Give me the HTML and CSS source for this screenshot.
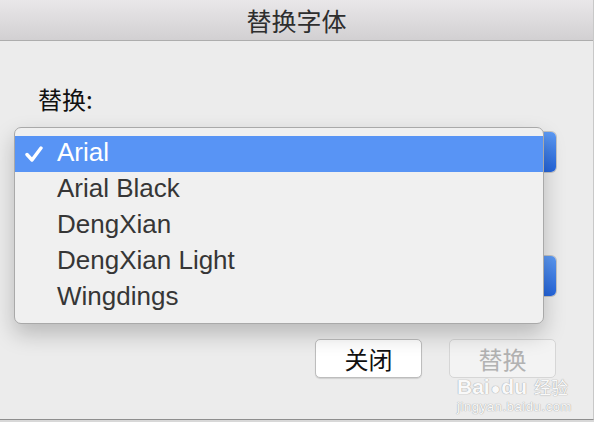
FILE: index.html
```html
<!DOCTYPE html>
<html lang="zh">
<head>
<meta charset="utf-8">
<link rel="stylesheet" href="styles.css">
</head>
<body>
<div class="window">
  <div class="titlebar">替换字体</div>
  <div class="content">
    <div class="label">替换:</div>
    <div class="popup"><span class="cap"></span></div>
    <div class="spacer"></div>
    <div class="popup"><span class="cap"></span></div>
    <div class="actions">
      <button class="btn">关闭</button>
      <button class="btn disabled">替换</button>
    </div>
  </div>
  <ul class="menu">
    <li class="item selected"><span class="check"><svg width="18" height="16" viewBox="0 0 18 16"><path d="M2 8.5 L7 14 L16 2" fill="none" stroke="#fff" stroke-width="3.4" stroke-linecap="round" stroke-linejoin="round"/></svg></span><span>Arial</span></li>
    <li class="item"><span class="check"></span><span>Arial Black</span></li>
    <li class="item"><span class="check"></span><span>DengXian</span></li>
    <li class="item"><span class="check"></span><span>DengXian Light</span></li>
    <li class="item"><span class="check"></span><span>Wingdings</span></li>
  </ul>
  <div class="watermark">
    <div class="wm-logo"><span>Bai</span><span class="paw">●</span><span>du</span><span class="wm-cn">经验</span></div>
    <div class="wm-url">jingyan.baidu.com</div>
  </div>
</div>
</body>
</html>
```
FILE: styles.css
```css
html, body {
  margin: 0;
  padding: 0;
  background: #d8d8d8;
}
.window {
  position: relative;
  width: 593px;
  height: 419px;
  background: #ececec;
  border-bottom: 1px solid #8e8e8e;
  border-right: 1px solid #c8c8c8;
  display: flex;
  flex-direction: column;
  overflow: hidden;
}
.titlebar {
  flex: none;
  height: 41px;
  box-sizing: border-box;
  padding-top: 1px;
  border-bottom: 1px solid #adadad;
  background: linear-gradient(#e9e7e9, #d2d0d2);
  display: flex;
  align-items: center;
  justify-content: center;
  font-family: "Noto Sans CJK SC", sans-serif;
  font-size: 25px;
  color: #2e2e2e;
  line-height: 1;
}
.content {
  flex: 1;
  display: flex;
  flex-direction: column;
  padding: 43px 37px 0 38px;
}
.label {
  font-family: "Noto Sans CJK SC", sans-serif;
  font-size: 24px;
  line-height: 30px;
  color: #111;
  height: 30px;
}
.popup {
  margin-top: 18px;
  height: 40px;
  border-radius: 5px;
  background: #fff;
  box-shadow: 0 0 0 1px #c4c4c4;
  display: flex;
  justify-content: flex-end;
}
.spacer {
  height: 27px;
  margin-top: 27px;
}
.spacer + .popup {
  margin-top: 30px;
}
.popup .cap {
  width: 22px;
  border-radius: 0 5px 5px 0;
  background: linear-gradient(#5d9af4, #2465dc);
}
.actions {
  margin-top: 43px;
  display: flex;
  justify-content: flex-end;
  gap: 27px;
}
.btn {
  width: 107px;
  height: 39px;
  border: 1px solid #bdbdbd;
  border-radius: 5px;
  background: #fff;
  box-shadow: 0 1px 1px rgba(0,0,0,0.12);
  font-family: "Noto Sans CJK SC", sans-serif;
  font-size: 24px;
  color: #111;
  padding: 0;
  line-height: 1;
}
.btn.disabled {
  background: #f3f3f3;
  border-color: #d6d6d6;
  box-shadow: none;
  color: #b2b2b2;
}
.menu {
  position: absolute;
  left: 14px;
  top: 127px;
  width: 528px;
  margin: 0;
  padding: 8px 0 7px;
  list-style: none;
  background: #f0f0f0;
  border: 1px solid #a9a9a9;
  border-radius: 7px;
  box-shadow: 0 10px 22px rgba(0,0,0,0.22);
}
.item {
  display: grid;
  grid-template-columns: 42px 1fr;
  align-items: center;
  height: 36px;
  padding-bottom: 3px;
  box-sizing: border-box;
  font-family: "Liberation Sans", Arial, sans-serif;
  font-size: 26px;
  line-height: 33px;
  color: #363636;
}
.item.selected {
  background: #5894f5;
  color: #fff;
}
.check {
  display: flex;
  align-items: center;
  padding-left: 10px;
  padding-top: 3px;
}
.watermark {
  position: absolute;
  left: 457px;
  top: 378px;
  color: rgba(255,255,255,0.95);
  text-shadow: 0 0 1px #a8a8a8, 0 0 1px #a8a8a8;
  pointer-events: none;
}
.wm-logo {
  display: flex;
  align-items: baseline;
  font-family: "Liberation Sans", Arial, sans-serif;
  font-size: 21px;
  font-weight: bold;
  line-height: 18px;
}
.wm-logo .paw {
  font-size: 16px;
  margin: 0 1px;
}
.wm-cn {
  font-family: "Noto Sans CJK SC", sans-serif;
  font-size: 17px;
  font-weight: normal;
  margin-left: 7px;
}
.wm-url {
  font-family: "Liberation Sans", Arial, sans-serif;
  font-size: 13px;
  line-height: 14px;
  letter-spacing: 0.6px;
  margin-top: 2px;
}
```
